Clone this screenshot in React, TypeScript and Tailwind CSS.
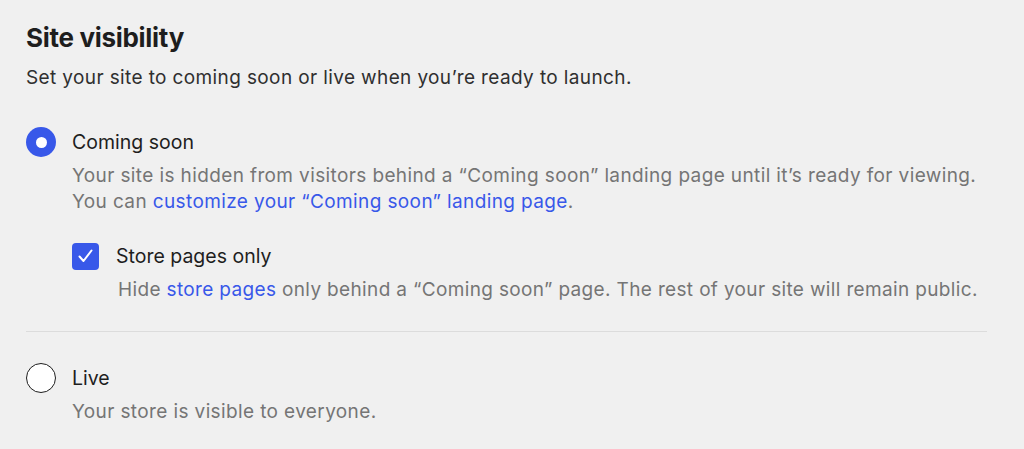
import React from "react";

const font = { fontFamily: "Inter, 'Noto Sans', sans-serif" };

export default function App() {
  return (
    <div style={font} className="w-[1024px] h-[449px] bg-[#f0f0f0] px-[26px] pt-[21px] overflow-hidden">
      <h2 className="text-[26px] leading-[34px] font-bold text-[#1e1e1e] tracking-[-0.3px]">Site visibility</h2>
      <p className="mt-[10px] text-[19px] leading-[26px] tracking-[0.38px] text-[#2f2f2f]">
        Set your site to coming soon or live when you’re ready to launch.
      </p>

      {/* Coming soon */}
      <div className="mt-[36px] flex gap-[16px]">
        <div className="w-[30px] h-[30px] rounded-full bg-[#3858e9] flex items-center justify-center shrink-0">
          <div className="w-[11px] h-[11px] rounded-full bg-white" />
        </div>
        <div className="flex-1">
          <div className="text-[19.5px] leading-[30px] text-[#1e1e1e]">Coming soon</div>
          <p className="mt-[6px] text-[19px] leading-[26px] tracking-[0.38px] text-[#757575]">
            Your site is hidden from visitors behind a “Coming soon” landing page until it’s ready for viewing.
            <br />
            You can <span className="text-[#3858e9]">customize your “Coming soon” landing page</span>.
          </p>

          <div className="mt-[27px] flex gap-[17px] items-center">
            <div className="w-[27px] h-[27px] rounded-[4px] bg-[#3858e9] flex items-center justify-center shrink-0">
              <svg width="27" height="27" viewBox="0 0 27 27" fill="none">
                <path d="M7.5 13.5 L11.5 18 L19.5 7.5" stroke="white" strokeWidth="2" strokeLinecap="round" strokeLinejoin="round" />
              </svg>
            </div>
            <div className="text-[19.5px] leading-[28px] text-[#1e1e1e]">Store pages only</div>
          </div>
          <p className="mt-[7px] ml-[46px] text-[19px] leading-[26px] tracking-[0.35px] text-[#757575]">
            Hide <span className="text-[#3858e9]">store pages</span> only behind a “Coming soon” page. The rest of your site will remain public.
          </p>
        </div>
      </div>

      <div className="mt-[28px] w-[961px] h-px bg-[#dcdcdc]" />

      {/* Live */}
      <div className="mt-[31px] flex gap-[16px]">
        <div className="w-[30px] h-[30px] rounded-full bg-white border-[1.75px] border-[#1e1e1e] shrink-0" />
        <div className="flex-1">
          <div className="text-[19.5px] leading-[30px] text-[#1e1e1e]">Live</div>
          <p className="mt-[6px] text-[19px] leading-[26px] tracking-[0.38px] text-[#757575]">Your store is visible to everyone.</p>
        </div>
      </div>
    </div>
  );
}
